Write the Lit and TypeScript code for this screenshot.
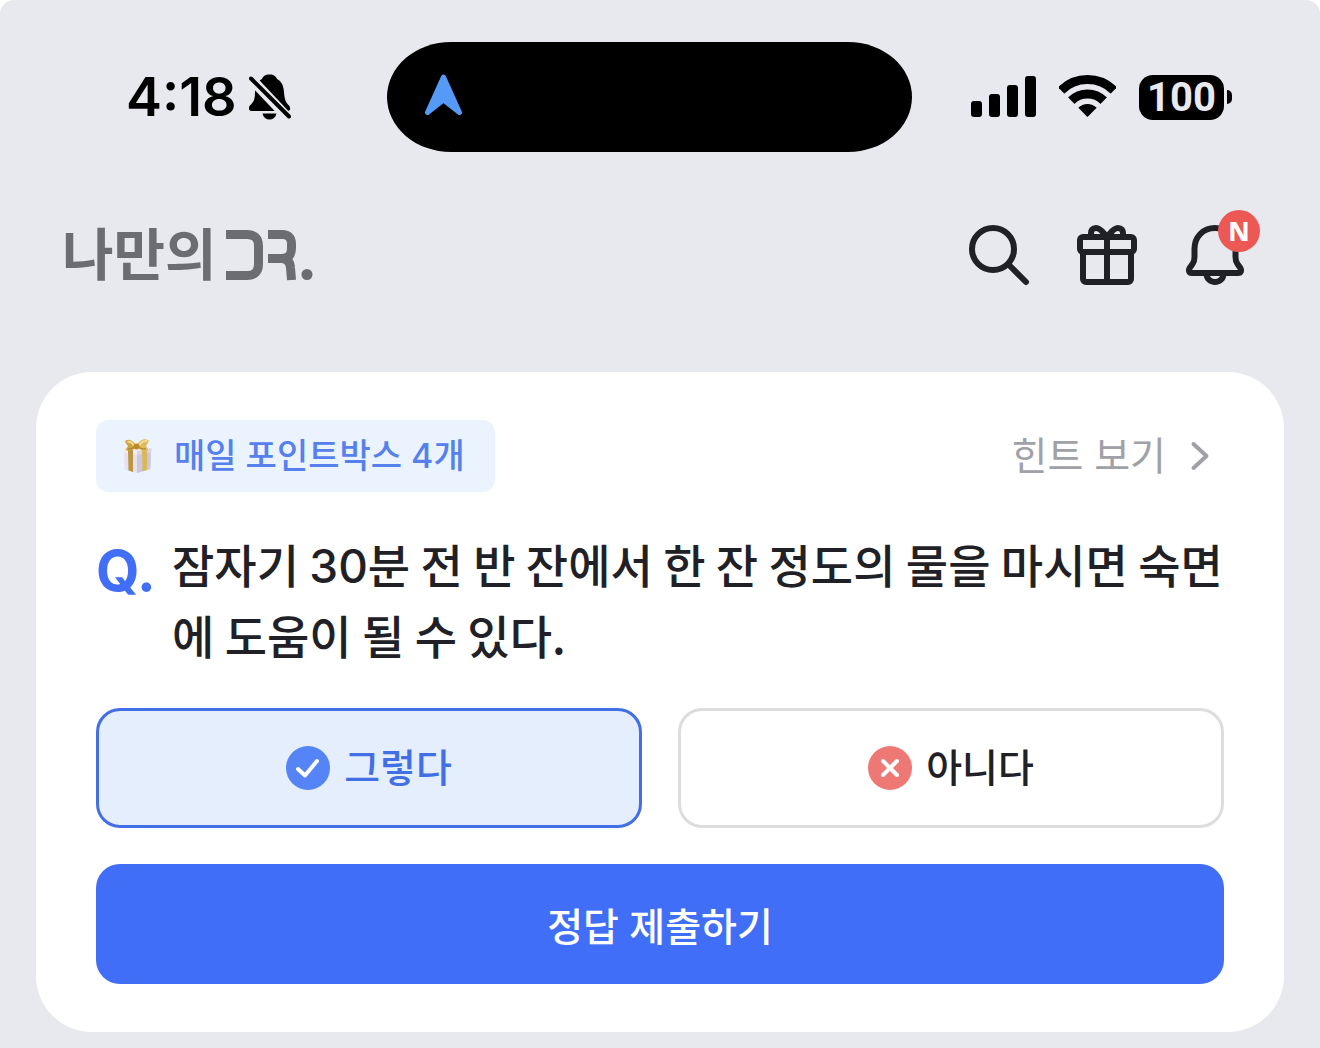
import { LitElement, html, css, svg } from "lit";
import { customElement, state } from "lit/decorators.js";
import { classMap } from "lit/directives/class-map.js";

type Answer = "yes" | "no";

const checkMark = svg`<path d="M12 23L19 29.5L31 15" />`;
const crossMark = svg`<path d="M15 15L29 29M29 15L15 29" />`;

@customElement("status-bar")
export class StatusBar extends LitElement {
  static styles = css`
    :host {
      display: grid;
      grid-template-columns: 1fr auto auto;
      align-items: center;
      padding: 0 88px 0 126px;
      color: #000;
    }
    .clock {
      display: flex;
      align-items: center;
      gap: 12px;
      font-family: Inter, "Liberation Sans", sans-serif;
      font-weight: 600;
      font-size: 54px;
      line-height: 64px;
    }
    svg {
      display: block;
    }
    .island {
      box-sizing: border-box;
      width: 525px;
      height: 110px;
      padding: 32px 37px;
      border-radius: 64px / 55px;
      background: #000;
    }
    .signals {
      display: flex;
      align-items: center;
      gap: 23px;
      padding-left: 59px;
    }
    .battery {
      display: flex;
      align-items: center;
      gap: 3px;
    }
    .level {
      width: 85px;
      height: 45px;
      border-radius: 14px;
      background: #000;
      color: #e8e9ee;
      font-family: Roboto, "Liberation Sans", sans-serif;
      font-weight: 700;
      font-size: 40px;
      line-height: 46px;
      text-align: center;
    }
    .nub {
      width: 5px;
      height: 14px;
      border-radius: 0 5px 5px 0;
      background: #000;
    }
  `;

  render() {
    return html`
      <div class="clock">
        <span>4:18</span>
        <svg width="42" height="46" viewBox="0 0 42 46" aria-label="무음" role="img">
          <path
            d="M20.500 0.500C25 0.500 27 2.500 28 5C33 7.500 34.500 12 35 18C35.500 26 37 28.500 40 31.500C42 34 41.500 37 38.500 37H3C-0.500 37 -1 33.500 1 31.500C4.500 28 6 26 6 18C6.500 12 8 7.500 13 5C14 2.500 16 0.500 20.500 0.500Z"
          />
          <path d="M13.500 39.500H27.500C26.500 43.500 24 45.500 20.500 45.500S14.500 43.500 13.500 39.500Z" />
          <path d="M-2 0.500L43 48" stroke="#e8e9ee" stroke-width="10" />
          <path d="M2 4.500L40 42.500" stroke="#000" stroke-width="4" stroke-linecap="round" />
        </svg>
      </div>
      <div class="island">
        <svg width="40" height="42" viewBox="0 0 40 42" aria-hidden="true">
          <path
            d="M19.500 3L35.500 38.500L19.500 26L3.500 38.500Z"
            fill="#559af6"
            stroke="#559af6"
            stroke-width="5"
            stroke-linejoin="round"
          />
        </svg>
      </div>
      <div class="signals">
        <svg width="65" height="42" viewBox="0 0 65 42" aria-label="신호" role="img">
          <rect x="0" y="25" width="11" height="16" rx="3" />
          <rect x="18" y="18" width="11" height="23" rx="3" />
          <rect x="36" y="9" width="11" height="32" rx="3" />
          <rect x="54" y="0" width="11" height="41" rx="3" />
        </svg>
        <svg width="57" height="44" viewBox="0 0 57 44" aria-label="Wi-Fi" role="img">
          <clipPath id="wedge"><path d="M28.500 42L-14 -1H71Z" /></clipPath>
          <g clip-path="url(#wedge)" fill="none" stroke="#000" stroke-width="9">
            <circle cx="28.500" cy="42" r="37.500" />
            <circle cx="28.500" cy="42" r="23" />
            <circle cx="28.500" cy="42" r="6.500" stroke-width="13" />
          </g>
        </svg>
        <div class="battery">
          <div class="level">100</div>
          <div class="nub"></div>
        </div>
      </div>
    `;
  }
}

@customElement("app-header")
export class AppHeader extends LitElement {
  static styles = css`
    :host {
      display: flex;
      align-items: center;
      justify-content: space-between;
      padding: 0 69px 0 62px;
    }
    .brand {
      display: flex;
      align-items: center;
      gap: 9px;
      color: #6b6d73;
      font-family: Inter, "Noto Sans CJK KR", sans-serif;
      font-weight: 700;
      font-size: 56px;
      line-height: 72px;
      text-decoration: none;
    }
    .mark {
      fill: none;
      stroke: #6b6d73;
      stroke-width: 9;
    }
    .dot {
      fill: #6b6d73;
      stroke: none;
    }
    .actions {
      display: flex;
      gap: 36px;
    }
    button {
      position: relative;
      width: 72px;
      height: 72px;
      padding: 0;
      border: 0;
      background: none;
    }
    .icon {
      display: block;
      fill: none;
      stroke: #1f2126;
      stroke-width: 6;
      stroke-linecap: round;
      stroke-linejoin: round;
    }
    .badge {
      position: absolute;
      top: -9px;
      left: 39px;
      width: 42px;
      height: 42px;
      border-radius: 50%;
      background: #ec5853;
      color: #fff;
      font-family: "Noto Sans", Inter, sans-serif;
      font-weight: 800;
      font-size: 26px;
      line-height: 42px;
      text-align: center;
    }
  `;

  render() {
    return html`
      <a class="brand" href="#">
        <span>나만의</span>
        <svg class="mark" width="88" height="56" viewBox="0 0 88 56" aria-label="DR." role="img">
          <path d="M0 7.500H21Q32.500 7.500 32.500 19V37Q32.500 48.500 21 48.500H0" />
          <path d="M42 7.500H56Q65.500 7.500 65.500 17V21Q65.500 31.500 56 31.500H42" />
          <path d="M56 31.500Q64 32 64.500 41L65.500 53" />
          <circle class="dot" cx="81" cy="47.500" r="5.500" />
        </svg>
      </a>
      <div class="actions">
        <button type="button" aria-label="검색">
          <svg class="icon" width="72" height="72" viewBox="0 0 72 72">
            <circle cx="30" cy="30" r="21" />
            <path d="M45.500 45.500L63 63" />
          </svg>
        </button>
        <button type="button" aria-label="선물">
          <svg class="icon" width="72" height="72" viewBox="0 0 72 72">
            <rect x="9" y="18" width="54" height="15" rx="3" />
            <path d="M12 33V60A3 3 0 0 0 15 63H57A3 3 0 0 0 60 60V33" />
            <path d="M36 18V63" />
            <path d="M36 18C32 14 30 9 25 9C21.500 9 20 11.500 20 14V17" />
            <path d="M36 18C40 14 42 9 47 9C50.500 9 52 11.500 52 14V17" />
          </svg>
        </button>
        <button type="button" aria-label="알림">
          <svg class="icon" width="72" height="72" viewBox="0 0 72 72">
            <path
              d="M36 9C24 9 15.500 18 15.500 30V38C15.500 41 15 43 13.500 45L11 48.500C9 51.500 10 54 13 54H59C62 54 63 51.500 61 48.500L58.500 45C57 43 56.500 41 56.500 38V30C56.500 18 48 9 36 9Z"
            />
            <path d="M27.500 55A8.500 8 0 0 0 44.500 55" />
          </svg>
          <span class="badge">N</span>
        </button>
      </div>
    `;
  }
}

@customElement("quiz-card")
export class QuizCard extends LitElement {
  @state() private answer: Answer = "yes";

  static styles = css`
    :host {
      display: block;
      padding: 48px 60px;
      border-radius: 56px;
      background: #fff;
      color: #1f2126;
      font-family: Inter, "Noto Sans CJK KR", sans-serif;
      font-weight: 500;
    }
    form {
      display: flex;
      flex-direction: column;
      gap: 36px;
    }
    .top {
      display: flex;
      align-items: center;
      justify-content: space-between;
    }
    .chip {
      display: flex;
      align-items: center;
      gap: 20px;
      padding: 0 30px 0 24px;
      border-radius: 12px;
      background: #ebf4fe;
      color: #5580ee;
      font-size: 34px;
      line-height: 72px;
    }
    .hint {
      display: flex;
      align-items: center;
      gap: 10px;
      color: #a0a1a7;
      font-size: 39px;
      line-height: 72px;
      font-weight: 400;
      text-decoration: none;
    }
    svg {
      display: block;
      flex: none;
    }
    .question {
      display: grid;
      grid-template-columns: 76px 1fr;
      font-size: 46px;
      line-height: 72px;
    }
    .q {
      color: #416ef6;
      font-weight: 700;
      font-size: 56px;
      line-height: 86px;
      height: 72px;
    }
    .text {
      margin: 0;
      font-family: "Noto Sans CJK KR", sans-serif;
      line-height: 71px;
      word-break: break-all;
    }
    .number {
      font-family: Inter, "Liberation Sans", sans-serif;
      line-height: 1;
    }
    fieldset {
      display: grid;
      grid-template-columns: 1fr 1fr;
      gap: 36px;
      min-width: 0;
      margin: 0;
      padding: 0;
      border: 0;
    }
    .question {
      min-height: 144px;
    }
    .option {
      box-sizing: border-box;
      display: flex;
      align-items: center;
      justify-content: center;
      gap: 14px;
      height: 120px;
      border: 3px solid #dcdddf;
      border-radius: 24px;
      font-size: 39px;
      line-height: 60px;
    }
    .option.selected {
      border-color: #436fe6;
      background: #e4eefd;
      color: #436fe6;
    }
    input {
      appearance: none;
      width: 0;
      height: 0;
      margin: 0 -14px 0 0;
    }
    .symbol {
      fill: none;
      stroke: #fff;
      stroke-width: 4;
      stroke-linecap: round;
      stroke-linejoin: round;
      border-radius: 50%;
    }
    .yes {
      background: #5584f6;
    }
    .no {
      background: #ed7874;
    }
    .submit {
      height: 120px;
      padding: 0;
      border: 0;
      border-radius: 24px;
      background: #416ef6;
      color: #fff;
      font: inherit;
      font-size: 39px;
    }
  `;

  private renderOption(value: Answer, label: string) {
    const selected = this.answer === value;
    return html`
      <label class=${classMap({ option: true, selected })}>
        <input
          type="radio"
          name="answer"
          .value=${value}
          .checked=${selected}
          @change=${() => (this.answer = value)}
        />
        <svg class="symbol ${value}" width="44" height="44" viewBox="0 0 44 44" aria-hidden="true">
          ${value === "yes" ? checkMark : crossMark}
        </svg>
        <span>${label}</span>
      </label>
    `;
  }

  render() {
    return html`
      <form @submit=${(e: Event) => e.preventDefault()}>
        <div class="top">
          <div class="chip">
            <svg width="34" height="36" viewBox="0 0 34 36" aria-hidden="true">
              <path d="M4 12L17 14V35L4.500 31.500Z" fill="#e6e1ee" />
              <path d="M17 14L31 11L30.500 31L17 35Z" fill="#cdc6dc" />
              <path d="M3 10L16 6L31.500 10L17 14Z" fill="#f3eff5" />
              <path d="M3 10L17 13V17L3.500 14.500Z" fill="#f1edf6" />
              <path d="M17 13L31.500 10V14L17 17Z" fill="#dcd5e6" />
              <path d="M8 11L13 12V34L8.500 32.500Z" fill="#bd9440" />
              <path d="M22 12L27 11V32L22.500 33.500Z" fill="#d9b858" />
              <path d="M16 9C12 13 9 13.500 5.500 12L8 8L5 4C6 0.500 12 1 16 7Z" fill="#d0a23c" />
              <path d="M17 9C21 13.500 25 13.500 28.500 12L26 8L29 3C26 -0.500 20 1 17 7Z" fill="#dfba5a" />
              <path d="M7.500 4C10 3 13 5.500 14 8M27 3C24 2.500 21 4.500 19 7.500" fill="none" stroke="#f3dc94" stroke-width="2" />
              <path d="M8 11C10 11 12 10.500 14 9.500M26 11C23 11 21 10.500 19 9.500" fill="none" stroke="#a97c26" stroke-width="1" />
              <ellipse cx="16.500" cy="8.500" rx="3" ry="3" fill="#b88a2c" />
            </svg>
            <span>매일 포인트박스 4개</span>
          </div>
          <a class="hint" href="#">
            <span>힌트 보기</span>
            <svg width="48" height="48" viewBox="0 0 48 48" aria-hidden="true">
              <path
                d="M17.500 12L30.500 24L17.500 36"
                fill="none"
                stroke="#a0a1a7"
                stroke-width="4"
                stroke-linecap="round"
                stroke-linejoin="round"
              />
            </svg>
          </a>
        </div>
        <div class="question">
          <span class="q">Q.</span>
          <p class="text">
            잠자기 <span class="number">30</span>분 전 반 잔에서 한 잔 정도의 물을 마시면 숙면에 도움이 될 수 있다.
          </p>
        </div>
        <fieldset aria-label="정답 선택">
          ${this.renderOption("yes", "그렇다")} ${this.renderOption("no", "아니다")}
        </fieldset>
        <button class="submit" type="submit">정답 제출하기</button>
      </form>
    `;
  }
}

@customElement("app-root")
export class AppRoot extends LitElement {
  static styles = css`
    :host {
      display: block;
      background: #fff;
    }
    .screen {
      box-sizing: border-box;
      min-height: 100vh;
      padding: 42px 0 16px;
      border-radius: 14px 14px 0 0;
      background: #e8e9ee;
    }
    app-header {
      margin-top: 67px;
    }
    quiz-card {
      margin: 81px 36px 0;
    }
  `;

  render() {
    return html`
      <div class="screen">
        <status-bar></status-bar>
        <app-header></app-header>
        <quiz-card></quiz-card>
      </div>
    `;
  }
}
